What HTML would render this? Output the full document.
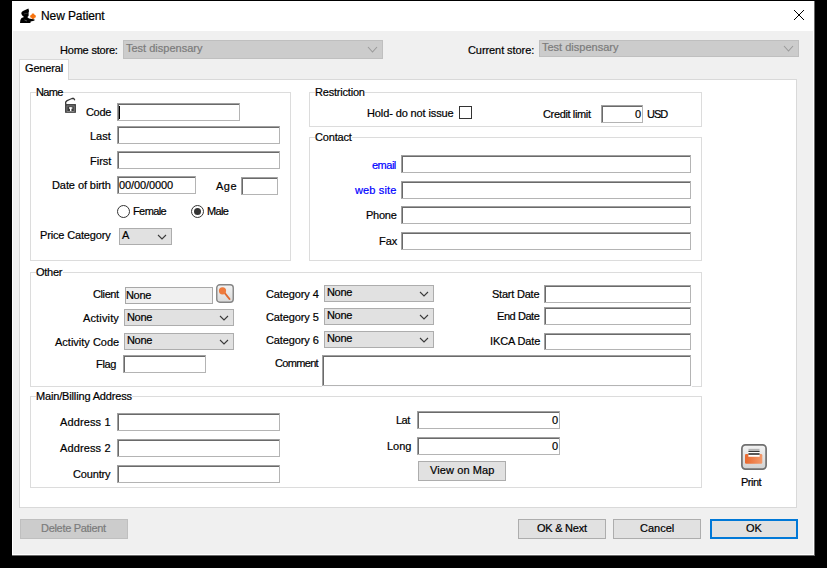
<!DOCTYPE html>
<html><head><meta charset="utf-8"><style>
html,body{margin:0;padding:0;}
body{width:827px;height:568px;background:#000;position:relative;overflow:hidden;font-family:"Liberation Sans",sans-serif;font-size:11px;}
.a{position:absolute;}
.t{position:absolute;line-height:13px;white-space:pre;color:#000;-webkit-text-stroke:0.2px currentColor;}
</style></head><body>
<div class="a" style="left:12px;top:1px;width:803px;height:555px;background:#f0f0f0;"></div>
<div class="a" style="left:12px;top:1px;width:803px;height:30px;background:#fff;"></div>
<div class="a" style="left:12px;top:31px;width:1px;height:525px;background:#fff;"></div>
<div class="a" style="left:813px;top:1px;width:1px;height:554px;background:#fff;"></div>
<div class="a" style="left:814px;top:1px;width:1px;height:555px;background:#6a6a6a;"></div>
<div class="a" style="left:12px;top:554px;width:802px;height:1px;background:#fff;"></div>
<div class="a" style="left:12px;top:555px;width:803px;height:1px;background:#6a6a6a;"></div>
<div class="a" style="left:19px;top:79px;width:778px;height:429px;background:#fff;border:1px solid #d9d9d9;box-sizing:border-box;"></div>
<div class="a" style="left:19px;top:59px;width:50px;height:21px;background:#fff;border:1px solid #d9d9d9;border-bottom:none;box-sizing:border-box;"></div>
<div class="a" style="left:20px;top:79px;width:48px;height:2px;background:#fff;"></div>
<div class="a" style="left:30px;top:92px;width:261px;height:169px;border:1px solid #dcdcdc;box-sizing:border-box;"></div>
<div class="a" style="left:36px;top:92px;width:27px;height:1px;background:#fff;"></div>
<div class="a" style="left:309px;top:92px;width:393px;height:35px;border:1px solid #dcdcdc;box-sizing:border-box;"></div>
<div class="a" style="left:315px;top:92px;width:50px;height:1px;background:#fff;"></div>
<div class="a" style="left:309px;top:137px;width:393px;height:124px;border:1px solid #dcdcdc;box-sizing:border-box;"></div>
<div class="a" style="left:315px;top:137px;width:37px;height:1px;background:#fff;"></div>
<div class="a" style="left:30px;top:272px;width:672px;height:115px;border:1px solid #dcdcdc;box-sizing:border-box;"></div>
<div class="a" style="left:36px;top:272px;width:27px;height:1px;background:#fff;"></div>
<div class="a" style="left:30px;top:396px;width:672px;height:92px;border:1px solid #dcdcdc;box-sizing:border-box;"></div>
<div class="a" style="left:36px;top:396px;width:96px;height:1px;background:#fff;"></div>
<div class="a" style="left:117px;top:103px;width:123px;height:18px;background:#fff;border:1px solid;border-color:#a0a0a0 #b4b4b4 #b4b4b4 #a0a0a0;box-shadow:inset 1px 1px 0 #6a6a6a;box-sizing:border-box;"></div>
<div class="a" style="left:117px;top:126px;width:163px;height:18px;background:#fff;border:1px solid;border-color:#a0a0a0 #b4b4b4 #b4b4b4 #a0a0a0;box-shadow:inset 1px 1px 0 #6a6a6a;box-sizing:border-box;"></div>
<div class="a" style="left:117px;top:151px;width:163px;height:18px;background:#fff;border:1px solid;border-color:#a0a0a0 #b4b4b4 #b4b4b4 #a0a0a0;box-shadow:inset 1px 1px 0 #6a6a6a;box-sizing:border-box;"></div>
<div class="a" style="left:117px;top:176px;width:79px;height:18px;background:#fff;border:1px solid;border-color:#a0a0a0 #b4b4b4 #b4b4b4 #a0a0a0;box-shadow:inset 1px 1px 0 #6a6a6a;box-sizing:border-box;"></div>
<div class="a" style="left:241px;top:177px;width:37px;height:18px;background:#fff;border:1px solid;border-color:#a0a0a0 #b4b4b4 #b4b4b4 #a0a0a0;box-shadow:inset 1px 1px 0 #6a6a6a;box-sizing:border-box;"></div>
<div class="a" style="left:401px;top:155px;width:290px;height:18px;background:#fff;border:1px solid;border-color:#a0a0a0 #b4b4b4 #b4b4b4 #a0a0a0;box-shadow:inset 1px 1px 0 #6a6a6a;box-sizing:border-box;"></div>
<div class="a" style="left:401px;top:181px;width:290px;height:18px;background:#fff;border:1px solid;border-color:#a0a0a0 #b4b4b4 #b4b4b4 #a0a0a0;box-shadow:inset 1px 1px 0 #6a6a6a;box-sizing:border-box;"></div>
<div class="a" style="left:401px;top:206px;width:290px;height:18px;background:#fff;border:1px solid;border-color:#a0a0a0 #b4b4b4 #b4b4b4 #a0a0a0;box-shadow:inset 1px 1px 0 #6a6a6a;box-sizing:border-box;"></div>
<div class="a" style="left:401px;top:232px;width:290px;height:18px;background:#fff;border:1px solid;border-color:#a0a0a0 #b4b4b4 #b4b4b4 #a0a0a0;box-shadow:inset 1px 1px 0 #6a6a6a;box-sizing:border-box;"></div>
<div class="a" style="left:601px;top:105px;width:42px;height:18px;background:#fff;border:1px solid;border-color:#a0a0a0 #b4b4b4 #b4b4b4 #a0a0a0;box-shadow:inset 1px 1px 0 #6a6a6a;box-sizing:border-box;"></div>
<div class="a" style="left:123px;top:355px;width:83px;height:18px;background:#fff;border:1px solid;border-color:#a0a0a0 #b4b4b4 #b4b4b4 #a0a0a0;box-shadow:inset 1px 1px 0 #6a6a6a;box-sizing:border-box;"></div>
<div class="a" style="left:322px;top:355px;width:369px;height:31px;background:#fff;border:1px solid;border-color:#a0a0a0 #b4b4b4 #b4b4b4 #a0a0a0;box-shadow:inset 1px 1px 0 #6a6a6a;box-sizing:border-box;"></div>
<div class="a" style="left:544px;top:285px;width:147px;height:18px;background:#fff;border:1px solid;border-color:#a0a0a0 #b4b4b4 #b4b4b4 #a0a0a0;box-shadow:inset 1px 1px 0 #6a6a6a;box-sizing:border-box;"></div>
<div class="a" style="left:544px;top:307px;width:147px;height:18px;background:#fff;border:1px solid;border-color:#a0a0a0 #b4b4b4 #b4b4b4 #a0a0a0;box-shadow:inset 1px 1px 0 #6a6a6a;box-sizing:border-box;"></div>
<div class="a" style="left:544px;top:333px;width:147px;height:17px;background:#fff;border:1px solid;border-color:#a0a0a0 #b4b4b4 #b4b4b4 #a0a0a0;box-shadow:inset 1px 1px 0 #6a6a6a;box-sizing:border-box;"></div>
<div class="a" style="left:117px;top:413px;width:163px;height:18px;background:#fff;border:1px solid;border-color:#a0a0a0 #b4b4b4 #b4b4b4 #a0a0a0;box-shadow:inset 1px 1px 0 #6a6a6a;box-sizing:border-box;"></div>
<div class="a" style="left:117px;top:439px;width:163px;height:18px;background:#fff;border:1px solid;border-color:#a0a0a0 #b4b4b4 #b4b4b4 #a0a0a0;box-shadow:inset 1px 1px 0 #6a6a6a;box-sizing:border-box;"></div>
<div class="a" style="left:117px;top:465px;width:163px;height:18px;background:#fff;border:1px solid;border-color:#a0a0a0 #b4b4b4 #b4b4b4 #a0a0a0;box-shadow:inset 1px 1px 0 #6a6a6a;box-sizing:border-box;"></div>
<div class="a" style="left:417px;top:411px;width:143px;height:18px;background:#fff;border:1px solid;border-color:#a0a0a0 #b4b4b4 #b4b4b4 #a0a0a0;box-shadow:inset 1px 1px 0 #6a6a6a;box-sizing:border-box;"></div>
<div class="a" style="left:417px;top:437px;width:143px;height:18px;background:#fff;border:1px solid;border-color:#a0a0a0 #b4b4b4 #b4b4b4 #a0a0a0;box-shadow:inset 1px 1px 0 #6a6a6a;box-sizing:border-box;"></div>
<div class="a" style="left:322px;top:386px;width:370px;height:1px;background:#fbfbfd;"></div>
<div class="a" style="left:125px;top:287px;width:88px;height:17px;background:#f0f0f0;border:1px solid #a8a8a8;box-sizing:border-box;"></div>
<div class="a" style="left:119px;top:106px;width:1px;height:13px;background:#000;"></div>
<div class="a" style="left:123px;top:40px;width:260px;height:19px;background:#cccccc;border:1px solid #bfbfbf;box-sizing:border-box;"></div><svg class="a" style="left:366.5px;top:45.5px" width="11" height="7"><path d="M1 1 L5.5 6 L10 1" fill="none" stroke="#9a9a9a" stroke-width="1.1"/></svg>
<div class="a" style="left:539px;top:40px;width:260px;height:17px;background:#cccccc;border:1px solid #bfbfbf;box-sizing:border-box;"></div><svg class="a" style="left:782.5px;top:44.5px" width="11" height="7"><path d="M1 1 L5.5 6 L10 1" fill="none" stroke="#9a9a9a" stroke-width="1.1"/></svg>
<div class="a" style="left:119px;top:228px;width:53px;height:17px;background:#e1e1e1;border:1px solid #adadad;box-sizing:border-box;"></div><svg class="a" style="left:157.0px;top:233.5px" width="10" height="6"><path d="M1 1 L5.0 5 L9 1" fill="none" stroke="#3a3a3a" stroke-width="1.1"/></svg>
<div class="a" style="left:124px;top:309px;width:110px;height:17px;background:#e1e1e1;border:1px solid #adadad;box-sizing:border-box;"></div><svg class="a" style="left:219.0px;top:314.5px" width="10" height="6"><path d="M1 1 L5.0 5 L9 1" fill="none" stroke="#3a3a3a" stroke-width="1.1"/></svg>
<div class="a" style="left:124px;top:333px;width:110px;height:17px;background:#e1e1e1;border:1px solid #adadad;box-sizing:border-box;"></div><svg class="a" style="left:219.0px;top:338.5px" width="10" height="6"><path d="M1 1 L5.0 5 L9 1" fill="none" stroke="#3a3a3a" stroke-width="1.1"/></svg>
<div class="a" style="left:324px;top:285px;width:110px;height:17px;background:#e1e1e1;border:1px solid #adadad;box-sizing:border-box;"></div><svg class="a" style="left:419.0px;top:290.5px" width="10" height="6"><path d="M1 1 L5.0 5 L9 1" fill="none" stroke="#3a3a3a" stroke-width="1.1"/></svg>
<div class="a" style="left:324px;top:308px;width:110px;height:17px;background:#e1e1e1;border:1px solid #adadad;box-sizing:border-box;"></div><svg class="a" style="left:419.0px;top:313.5px" width="10" height="6"><path d="M1 1 L5.0 5 L9 1" fill="none" stroke="#3a3a3a" stroke-width="1.1"/></svg>
<div class="a" style="left:324px;top:331px;width:110px;height:17px;background:#e1e1e1;border:1px solid #adadad;box-sizing:border-box;"></div><svg class="a" style="left:419.0px;top:336.5px" width="10" height="6"><path d="M1 1 L5.0 5 L9 1" fill="none" stroke="#3a3a3a" stroke-width="1.1"/></svg>
<div class="a" style="left:459px;top:106px;width:13px;height:13px;background:#fff;border:1px solid #333;box-sizing:border-box;"></div>
<div class="a" style="left:117px;top:205px;width:13px;height:13px;border-radius:50%;border:1px solid #333;box-sizing:border-box;background:#fff"></div>
<div class="a" style="left:191px;top:205px;width:13px;height:13px;border-radius:50%;border:1px solid #333;box-sizing:border-box;background:#fff"></div>
<div class="a" style="left:194px;top:208px;width:7px;height:7px;border-radius:50%;background:#333"></div>
<div class="a" style="left:20px;top:519px;width:108px;height:20px;background:#cccccc;border:1px solid #bfbfbf;box-sizing:border-box;"></div>
<div class="a" style="left:518px;top:519px;width:88px;height:20px;background:#e1e1e1;border:1px solid #adadad;box-sizing:border-box;"></div>
<div class="a" style="left:613px;top:519px;width:88px;height:20px;background:#e1e1e1;border:1px solid #adadad;box-sizing:border-box;"></div>
<div class="a" style="left:710px;top:519px;width:88px;height:20px;background:#e1e1e1;border:2px solid #0078d7;box-sizing:border-box;"></div>
<div class="a" style="left:418px;top:461px;width:88px;height:20px;background:#e1e1e1;border:1px solid #adadad;box-sizing:border-box;"></div>
<svg class="a" style="left:216px;top:284px" width="18" height="19" viewBox="0 0 18 19">
<defs><linearGradient id="sg" x1="0" y1="0" x2="0" y2="1"><stop offset="0" stop-color="#f2f2f2"/><stop offset="1" stop-color="#d9d9d9"/></linearGradient></defs>
<rect x="0.75" y="0.75" width="16.5" height="17.5" rx="3" fill="url(#sg)" stroke="#858585" stroke-width="1.4"/>
<path d="M7.5 7.5 L13.5 15" stroke="#e06a30" stroke-width="2" stroke-linecap="round"/>
<circle cx="6.5" cy="6.8" r="3.6" fill="#ee7a3c"/>
</svg>
<svg class="a" style="left:741px;top:444px" width="26" height="26" viewBox="0 0 26 26">
<defs><linearGradient id="pg" x1="0" y1="0" x2="0" y2="1"><stop offset="0" stop-color="#f3f3f3"/><stop offset="1" stop-color="#d2d2d2"/></linearGradient>
<linearGradient id="po" x1="0" y1="0" x2="1" y2="0"><stop offset="0" stop-color="#e8682e"/><stop offset="1" stop-color="#f39a6c"/></linearGradient></defs>
<rect x="0.9" y="0.9" width="24.2" height="24.2" rx="3.5" fill="url(#pg)" stroke="#707070" stroke-width="1.7"/>
<rect x="4" y="10" width="17.3" height="9.8" rx="1.2" fill="url(#po)"/>
<path d="M7.2 4.8 H18.8 L18.6 12.8 H7.4 Z" fill="#fff"/>
<rect x="7.4" y="4.8" width="11.2" height="1.3" fill="#b5b5b5"/>
<rect x="7.4" y="6.7" width="11.2" height="1.2" fill="#222"/>
<rect x="7.4" y="9.3" width="11.2" height="1.4" fill="#111"/>
</svg>
<svg class="a" style="left:64px;top:97px" width="13" height="17" viewBox="0 0 13 17">
<path d="M1.7 7.5 V5 L3.2 3.6 L5.6 2.5 L8 1.5 L9.8 1.5 L10.8 3.3" fill="none" stroke="#333" stroke-width="1.3" stroke-linejoin="bevel"/>
<rect x="1.1" y="7.1" width="10.8" height="8.7" fill="#333"/>
<rect x="2.9" y="8.9" width="7.3" height="5.6" fill="#3a3a3a" stroke="#8a8a8a" stroke-width="0.9"/>
<rect x="5" y="10.3" width="3.4" height="1.4" fill="#fff"/><rect x="6" y="10.3" width="1.4" height="3.7" fill="#fff"/>
</svg>
<svg class="a" style="left:16px;top:6px" width="24" height="20" viewBox="0 0 24 20">
<path d="M5.3 7.6 Q5.2 5.8 7 5.1 L12.4 2.6 L13.1 5.3 Q12.5 6 12.6 7 L12.6 9.8 Q12.2 10.8 11.2 11.1 L13 12.4 L18.6 13.4 Q19.2 14.4 17 15 L14.6 15.6 L14.4 16.9 L4 16.9 Q4 13.6 5.5 12.1 Q7 11.3 8 10.9 Q5.4 9.6 5.3 7.6 Z" fill="#000"/>
<path d="M8 8 Q10 7 11.5 7.5" stroke="#555" stroke-width="0.6" fill="none"/>
<path d="M8.5 14 L11 15" stroke="#666" stroke-width="0.8" fill="none"/>
<rect x="14.2" y="8.9" width="5.6" height="2.8" rx="1" fill="#f7730e"/>
<rect x="15.6" y="7.5" width="2.8" height="5.6" rx="1" fill="#f7730e"/>
</svg>
<svg class="a" style="left:793px;top:9.4px" width="12" height="12"><path d="M1 1 L11 11 M11 1 L1 11" stroke="#000" stroke-width="1"/></svg>
<div class="t" style="left:41px;top:10px;letter-spacing:-0.100px;font-size:12px;">New Patient</div>
<div class="t" style="left:60px;top:44px;letter-spacing:-0.200px;">Home store:</div>
<div class="t" style="left:468px;top:44px;letter-spacing:-0.077px;">Current store:</div>
<div class="t" style="left:25px;top:62px;letter-spacing:-0.167px;">General</div>
<div class="t" style="left:36px;top:86px;letter-spacing:-0.667px;">Name</div>
<div class="t" style="left:315px;top:86px;letter-spacing:-0.200px;">Restriction</div>
<div class="t" style="left:315px;top:131px;letter-spacing:-0.167px;">Contact</div>
<div class="t" style="left:36px;top:266px;letter-spacing:-0.250px;">Other</div>
<div class="t" style="left:36px;top:390px;letter-spacing:-0.158px;">Main/Billing Address</div>
<div class="t" style="left:86px;top:106px;letter-spacing:-0.333px;">Code</div>
<div class="t" style="left:90px;top:130px;">Last</div>
<div class="t" style="left:90px;top:155px;">First</div>
<div class="t" style="left:52px;top:179px;letter-spacing:-0.083px;">Date of birth</div>
<div class="t" style="left:216px;top:180px;letter-spacing:0.500px;">Age</div>
<div class="t" style="left:133px;top:205px;letter-spacing:-0.600px;">Female</div>
<div class="t" style="left:207px;top:205px;letter-spacing:-0.667px;">Male</div>
<div class="t" style="left:40px;top:229px;letter-spacing:-0.154px;">Price Category</div>
<div class="t" style="left:367px;top:107px;letter-spacing:-0.118px;">Hold- do not issue</div>
<div class="t" style="left:543px;top:108px;letter-spacing:-0.364px;">Credit limit</div>
<div class="t" style="left:647px;top:108px;letter-spacing:-1.000px;">USD</div>
<div class="t" style="left:372px;top:159px;letter-spacing:-0.500px;color:#0000ff;">email</div>
<div class="t" style="left:355px;top:184px;letter-spacing:0.143px;color:#0000ff;">web site</div>
<div class="t" style="left:366px;top:209px;letter-spacing:-0.250px;">Phone</div>
<div class="t" style="left:379px;top:235px;">Fax</div>
<div class="t" style="left:93px;top:288px;letter-spacing:-0.400px;">Client</div>
<div class="t" style="left:83px;top:312px;letter-spacing:0.143px;">Activity</div>
<div class="t" style="left:55px;top:336px;">Activity Code</div>
<div class="t" style="left:96px;top:358px;letter-spacing:-0.333px;">Flag</div>
<div class="t" style="left:266px;top:288px;letter-spacing:-0.111px;">Category 4</div>
<div class="t" style="left:266px;top:311px;letter-spacing:-0.111px;">Category 5</div>
<div class="t" style="left:266px;top:334px;letter-spacing:-0.111px;">Category 6</div>
<div class="t" style="left:275px;top:357px;letter-spacing:-0.667px;">Comment</div>
<div class="t" style="left:492px;top:288px;letter-spacing:-0.222px;">Start Date</div>
<div class="t" style="left:497px;top:310px;letter-spacing:-0.429px;">End Date</div>
<div class="t" style="left:490px;top:335px;letter-spacing:-0.125px;">IKCA Date</div>
<div class="t" style="left:60px;top:416px;letter-spacing:0.125px;">Address 1</div>
<div class="t" style="left:60px;top:442px;letter-spacing:0.125px;">Address 2</div>
<div class="t" style="left:73px;top:468px;letter-spacing:-0.167px;">Country</div>
<div class="t" style="left:396px;top:414px;letter-spacing:-0.500px;">Lat</div>
<div class="t" style="left:387px;top:440px;">Long</div>
<div class="t" style="left:430px;top:464px;letter-spacing:0.100px;">View on Map</div>
<div class="t" style="left:741px;top:476px;letter-spacing:-0.500px;">Print</div>
<div class="t" style="left:41px;top:522px;letter-spacing:-0.308px;color:#7b7b7b;">Delete Patient</div>
<div class="t" style="left:537px;top:522px;letter-spacing:-0.250px;">OK &amp; Next</div>
<div class="t" style="left:640px;top:522px;">Cancel</div>
<div class="t" style="left:746px;top:522px;">OK</div>
<div class="t" style="left:126px;top:42px;color:#7b7b7b;">Test dispensary</div>
<div class="t" style="left:542px;top:41px;color:#7b7b7b;">Test dispensary</div>
<div class="t" style="left:122px;top:229px;">A</div>
<div class="t" style="left:126px;top:289px;letter-spacing:-0.333px;">None</div>
<div class="t" style="left:127px;top:311px;letter-spacing:-0.333px;">None</div>
<div class="t" style="left:127px;top:334px;letter-spacing:-0.333px;">None</div>
<div class="t" style="left:327px;top:286px;letter-spacing:-0.333px;">None</div>
<div class="t" style="left:327px;top:309px;letter-spacing:-0.333px;">None</div>
<div class="t" style="left:327px;top:332px;letter-spacing:-0.333px;">None</div>
<div class="t" style="left:119px;top:179px;letter-spacing:-0.111px;">00/00/0000</div>
<div class="t" style="left:635px;top:108px;">0</div>
<div class="t" style="left:552px;top:414px;">0</div>
<div class="t" style="left:552px;top:440px;">0</div>
</body></html>
